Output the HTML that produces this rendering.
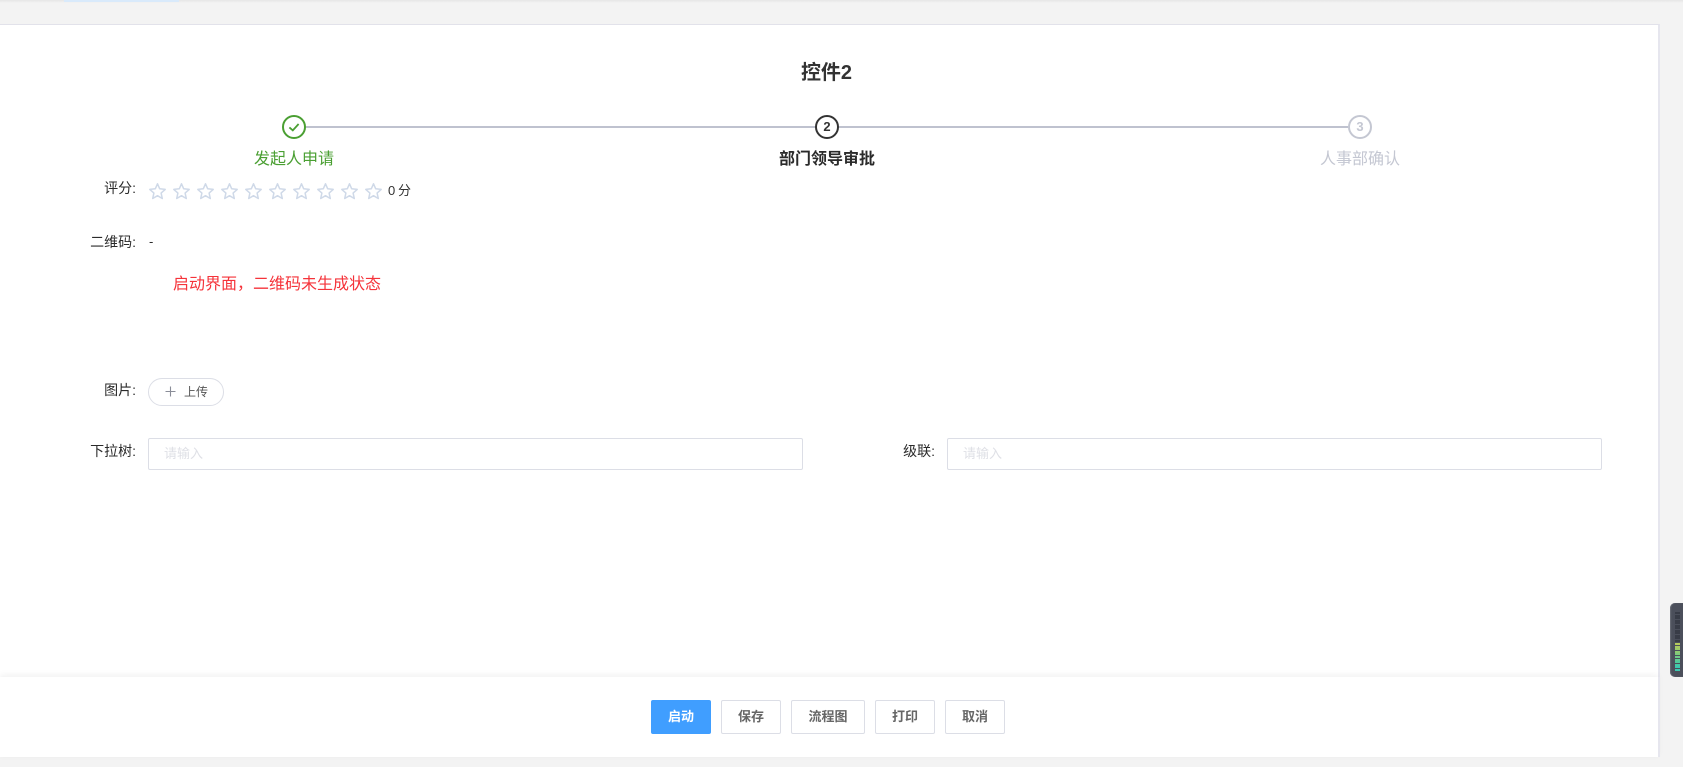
<!DOCTYPE html>
<html lang="zh">
<head>
<meta charset="utf-8">
<title>控件2</title>
<style>
html,body{margin:0;padding:0;}
body{width:1683px;height:767px;overflow:hidden;position:relative;background:#f3f3f3;font-family:"Liberation Sans","Noto Sans CJK SC",sans-serif;color:#2b2b2b;}
.a{position:absolute;white-space:nowrap;}
.topshade{left:0;top:0;width:1683px;height:3px;background:linear-gradient(#e6e6e6,#f3f3f3);}
.tab{left:64px;top:0;width:115px;height:2px;background:#d9eafb;}
.card{left:0;top:24px;width:1658px;height:732px;background:#fff;border-top:1px solid #e2e2ea;border-right:2px solid #e6e6ee;box-sizing:content-box;}
.title{left:700px;width:253px;top:61px;text-align:center;font-size:20px;line-height:24px;font-weight:bold;color:#333;}
.line{left:306px;top:126px;width:1042px;height:2px;background:#bfc2cf;}
.step{width:24px;height:24px;box-sizing:border-box;border:2px solid;border-radius:50%;background:#fff;top:115px;text-align:center;font-size:13px;font-weight:bold;line-height:20px;}
.sl{top:149px;width:160px;text-align:center;font-size:16px;line-height:22px;}
.lb{font-size:14px;line-height:18px;text-align:right;width:100px;left:36px;color:#2b2b2b;}
.star{top:182px;width:19px;height:19px;}
.input{height:32px;box-sizing:border-box;border:1px solid #dcdee6;border-radius:2px;background:#fff;top:438px;font-size:13px;line-height:30px;padding-left:15px;color:#dfe0e6;}
.footer{left:0;top:677px;width:1658px;height:80px;background:#fff;box-shadow:0 -2px 6px rgba(0,0,0,.06);}
.btn{top:700px;height:34px;box-sizing:border-box;border:1px solid #dcdee6;border-radius:2px;background:#fff;color:#666;font-size:13px;font-weight:bold;line-height:32px;text-align:center;}
.btn.p{background:#409eff;border-color:#409eff;color:#fff;}
.meter{left:1670px;top:603px;width:13px;height:74px;background:#4b4f5b;border-radius:5px 0 0 5px;box-shadow:inset 1px 0 1px #6a6e78;}
.bar{left:5px;width:5px;height:2px;}
</style>
</head>
<body>
<div class="a topshade"></div>
<div class="a tab"></div>
<div class="a card"></div>

<div class="a title">控件2</div>
<div class="a line"></div>

<div class="a step" style="left:282px;border-color:#4a9f32;">
<svg width="20" height="20" viewBox="0 0 20 20" style="display:block"><path d="M5.4 10.4 L8.8 13.4 L14.6 7" fill="none" stroke="#4a9f32" stroke-width="1.8"/></svg>
</div>
<div class="a step" style="left:815px;border-color:#333;color:#333;">2</div>
<div class="a step" style="left:1348px;border-color:#c4c7d2;color:#c4c7d2;">3</div>

<div class="a sl" style="left:214px;color:#4a9f32;">发起人申请</div>
<div class="a sl" style="left:747px;color:#2a2a2a;font-weight:bold;">部门领导审批</div>
<div class="a sl" style="left:1280px;color:#c4c7d2;">人事部确认</div>

<div class="a lb" style="top:179px;">评分:</div>
<svg class="a star" style="left:147.5px" viewBox="0 0 19 19"><path d="M9.5 1.8 L11.7 6.8 L17.2 7.4 L13.1 11.1 L14.3 16.5 L9.5 13.7 L4.7 16.5 L5.9 11.1 L1.8 7.4 L7.3 6.8 Z" fill="none" stroke="#cfd9e8" stroke-width="1.5" stroke-linejoin="round"/></svg>
<svg class="a star" style="left:171.5px" viewBox="0 0 19 19"><path d="M9.5 1.8 L11.7 6.8 L17.2 7.4 L13.1 11.1 L14.3 16.5 L9.5 13.7 L4.7 16.5 L5.9 11.1 L1.8 7.4 L7.3 6.8 Z" fill="none" stroke="#cfd9e8" stroke-width="1.5" stroke-linejoin="round"/></svg>
<svg class="a star" style="left:195.5px" viewBox="0 0 19 19"><path d="M9.5 1.8 L11.7 6.8 L17.2 7.4 L13.1 11.1 L14.3 16.5 L9.5 13.7 L4.7 16.5 L5.9 11.1 L1.8 7.4 L7.3 6.8 Z" fill="none" stroke="#cfd9e8" stroke-width="1.5" stroke-linejoin="round"/></svg>
<svg class="a star" style="left:219.5px" viewBox="0 0 19 19"><path d="M9.5 1.8 L11.7 6.8 L17.2 7.4 L13.1 11.1 L14.3 16.5 L9.5 13.7 L4.7 16.5 L5.9 11.1 L1.8 7.4 L7.3 6.8 Z" fill="none" stroke="#cfd9e8" stroke-width="1.5" stroke-linejoin="round"/></svg>
<svg class="a star" style="left:243.5px" viewBox="0 0 19 19"><path d="M9.5 1.8 L11.7 6.8 L17.2 7.4 L13.1 11.1 L14.3 16.5 L9.5 13.7 L4.7 16.5 L5.9 11.1 L1.8 7.4 L7.3 6.8 Z" fill="none" stroke="#cfd9e8" stroke-width="1.5" stroke-linejoin="round"/></svg>
<svg class="a star" style="left:267.5px" viewBox="0 0 19 19"><path d="M9.5 1.8 L11.7 6.8 L17.2 7.4 L13.1 11.1 L14.3 16.5 L9.5 13.7 L4.7 16.5 L5.9 11.1 L1.8 7.4 L7.3 6.8 Z" fill="none" stroke="#cfd9e8" stroke-width="1.5" stroke-linejoin="round"/></svg>
<svg class="a star" style="left:291.5px" viewBox="0 0 19 19"><path d="M9.5 1.8 L11.7 6.8 L17.2 7.4 L13.1 11.1 L14.3 16.5 L9.5 13.7 L4.7 16.5 L5.9 11.1 L1.8 7.4 L7.3 6.8 Z" fill="none" stroke="#cfd9e8" stroke-width="1.5" stroke-linejoin="round"/></svg>
<svg class="a star" style="left:315.5px" viewBox="0 0 19 19"><path d="M9.5 1.8 L11.7 6.8 L17.2 7.4 L13.1 11.1 L14.3 16.5 L9.5 13.7 L4.7 16.5 L5.9 11.1 L1.8 7.4 L7.3 6.8 Z" fill="none" stroke="#cfd9e8" stroke-width="1.5" stroke-linejoin="round"/></svg>
<svg class="a star" style="left:339.5px" viewBox="0 0 19 19"><path d="M9.5 1.8 L11.7 6.8 L17.2 7.4 L13.1 11.1 L14.3 16.5 L9.5 13.7 L4.7 16.5 L5.9 11.1 L1.8 7.4 L7.3 6.8 Z" fill="none" stroke="#cfd9e8" stroke-width="1.5" stroke-linejoin="round"/></svg>
<svg class="a star" style="left:363.5px" viewBox="0 0 19 19"><path d="M9.5 1.8 L11.7 6.8 L17.2 7.4 L13.1 11.1 L14.3 16.5 L9.5 13.7 L4.7 16.5 L5.9 11.1 L1.8 7.4 L7.3 6.8 Z" fill="none" stroke="#cfd9e8" stroke-width="1.5" stroke-linejoin="round"/></svg>
<div class="a" style="left:388px;top:182px;font-size:13px;line-height:18px;color:#333;letter-spacing:-.4px;">0 分</div>

<div class="a lb" style="top:233px;">二维码:</div>
<div class="a" style="left:149px;top:233px;font-size:13px;line-height:18px;">-</div>

<div class="a" style="left:173px;top:274px;font-size:16px;line-height:22px;color:#f5333a;">启动界面，二维码未生成状态</div>

<div class="a lb" style="top:381px;">图片:</div>
<div class="a" style="left:148px;top:378px;width:76px;height:28px;box-sizing:border-box;border:1px solid #dcdee6;border-radius:14px;background:#fff;"></div>
<svg class="a" style="left:165px;top:386px;" width="11" height="11" viewBox="0 0 11 11"><path d="M5.5 0.5V10.5M0.5 5.5H10.5" stroke="#8a8d98" stroke-width="1.1" fill="none"/></svg>
<div class="a" style="left:184px;top:383px;font-size:12px;line-height:18px;color:#555;">上传</div>

<div class="a lb" style="top:442px;">下拉树:</div>
<div class="a input" style="left:148px;width:655px;">请输入</div>
<div class="a lb" style="top:442px;left:835px;">级联:</div>
<div class="a input" style="left:947px;width:655px;">请输入</div>

<div class="a footer"></div>
<div class="a btn p" style="left:651px;width:60px;">启动</div>
<div class="a btn" style="left:721px;width:60px;">保存</div>
<div class="a btn" style="left:791px;width:74px;">流程图</div>
<div class="a btn" style="left:875px;width:60px;">打印</div>
<div class="a btn" style="left:945px;width:60px;">取消</div>
<div class="a" style="left:1658px;top:677px;width:2px;height:80px;background:#e6e6ee;"></div>

<div class="a meter">
<div class="a bar" style="top:9px;background:#383c47"></div>
<div class="a bar" style="top:11.5px;background:#383c47"></div>
<div class="a bar" style="top:14px;background:#383c47"></div>
<div class="a bar" style="top:16.5px;background:#383c47"></div>
<div class="a bar" style="top:19px;background:#383c47"></div>
<div class="a bar" style="top:21.5px;background:#383c47"></div>
<div class="a bar" style="top:24px;background:#383c47"></div>
<div class="a bar" style="top:26.5px;background:#383c47"></div>
<div class="a bar" style="top:29px;background:#383c47"></div>
<div class="a bar" style="top:31.5px;background:#383c47"></div>
<div class="a bar" style="top:34px;background:#383c47"></div>
<div class="a bar" style="top:36.5px;background:#383c47"></div>
<div class="a bar" style="top:40px;background:#b5c95c"></div>
<div class="a bar" style="top:42.6px;background:#a8c962"></div>
<div class="a bar" style="top:45.2px;background:#9bc96a"></div>
<div class="a bar" style="top:47.8px;background:#8dc972"></div>
<div class="a bar" style="top:50.4px;background:#7dc97c"></div>
<div class="a bar" style="top:53px;background:#6dc988"></div>
<div class="a bar" style="top:55.6px;background:#5dc992"></div>
<div class="a bar" style="top:58.2px;background:#50c99c"></div>
<div class="a bar" style="top:60.8px;background:#45c9a6"></div>
<div class="a bar" style="top:63.4px;background:#3cc9b0"></div>
<div class="a bar" style="top:66px;background:#3cc9b0"></div>
</div>
</body>
</html>
